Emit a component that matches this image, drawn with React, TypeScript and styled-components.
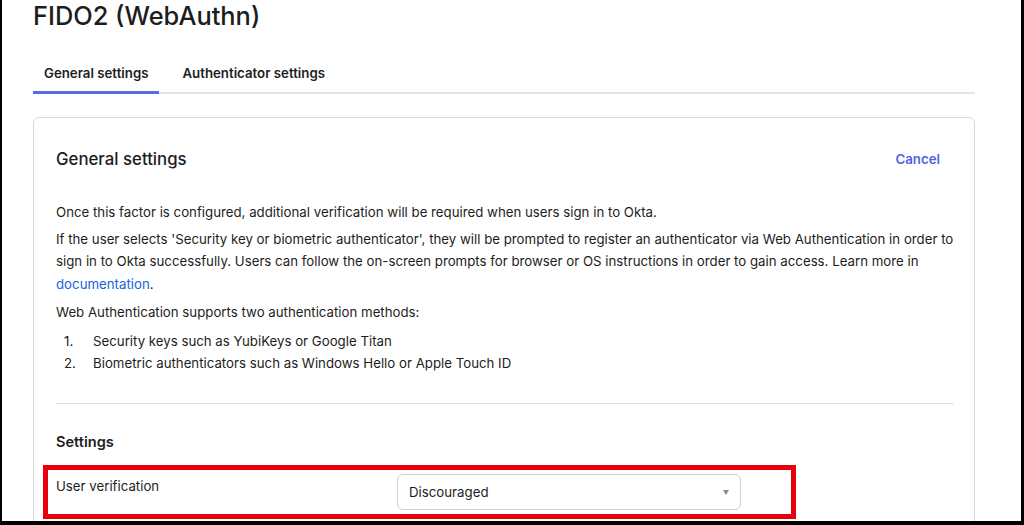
import React from "react";
import styled, { createGlobalStyle } from "styled-components";

const GlobalStyle = createGlobalStyle`
  html, body {
    margin: 0;
    padding: 0;
    background: #ffffff;
  }
  body {
    font-family: Inter, "Noto Sans", "Liberation Sans", sans-serif;
    color: #1d1d21;
    -webkit-font-smoothing: antialiased;
  }
  * { box-sizing: border-box; }
`;

const Frame = styled.div`
  width: 1024px;
  height: 525px;
  overflow: hidden;
  border-left: 2px solid #000;
  border-right: 3px solid #000;
  border-bottom: 4px solid #000;
  background: #fff;
`;

const Main = styled.main`
  padding: 1px 46px 0 31px;
  display: flex;
  flex-direction: column;
`;

const PageTitle = styled.h1`
  margin: 0;
  font-size: 25.4px;
  line-height: 30px;
  font-weight: 500;
  color: #1d1d21;
`;

const TabList = styled.div`
  margin-top: 21px;
  display: flex;
  box-shadow: inset 0 -2px 0 #e4e4e7;
`;

const Tab = styled.button<{ $active?: boolean }>`
  font-family: inherit;
  background: none;
  border: none;
  border-bottom: 3px solid ${(p) => (p.$active ? "#546be7" : "transparent")};
  padding: 11px 11px 8px;
  margin-right: ${(p) => (p.$active ? "12px" : "0")};
  font-size: 13.25px;
  line-height: 20px;
  font-weight: 600;
  color: #1d1d21;
  cursor: pointer;
`;

const Card = styled.section`
  margin-top: 23px;
  border: 1px solid #d7d7dc;
  border-radius: 6px;
  padding: 29px 20px 40px 22px;
`;

const CardHeader = styled.div`
  display: flex;
  justify-content: space-between;
  align-items: center;
  margin-bottom: 30px;
`;

const CardTitle = styled.h2`
  margin: 0;
  font-size: 16.8px;
  line-height: 24px;
  font-weight: 500;
  color: #1d1d21;
`;

const LinkButton = styled.button`
  font-family: inherit;
  background: none;
  border: none;
  padding: 0 14px 0 12px;
  font-size: 13.25px;
  line-height: 20px;
  font-weight: 600;
  color: #4c64e1;
  cursor: pointer;
`;

const Paragraph = styled.p<{ $tight?: boolean }>`
  margin: 0 0 ${(p) => (p.$tight ? "4px" : "6px")};
  font-size: 13.25px;
  line-height: 22.5px;
  color: #1d1d21;
`;

const DocLink = styled.a`
  color: #1662dd;
  text-decoration: none;
`;

const MethodList = styled.ol`
  list-style: none;
  margin: 0;
  padding: 0;
`;

const MethodItem = styled.li`
  display: flex;
  font-size: 13.25px;
  line-height: 22.5px;
  color: #1d1d21;
`;

const ItemNumber = styled.span`
  width: 37px;
  padding-left: 8px;
  flex-shrink: 0;
`;

const Divider = styled.hr`
  border: none;
  border-top: 1px solid #e1e1e5;
  margin: 28px 0 27px;
`;

const SectionTitle = styled.h3`
  margin: 0 0 21px;
  font-size: 14.6px;
  line-height: 22px;
  font-weight: 600;
  color: #1d1d21;
`;

const FieldRow = styled.div`
  position: relative;
  display: grid;
  grid-template-columns: 341px 344px;
  align-items: start;
`;

const FieldLabel = styled.label`
  padding-top: 1px;
  font-size: 13.25px;
  line-height: 22px;
  color: #1d1d21;
`;

const SelectBox = styled.div`
  height: 36px;
  border: 1px solid #d0d0d6;
  border-radius: 6px;
  display: flex;
  align-items: center;
  justify-content: space-between;
  padding: 0 11px;
  font-size: 13.25px;
  color: #1d1d21;
  background: #fff;
`;

const Caret = styled.span`
  width: 0;
  height: 0;
  border-left: 3.5px solid transparent;
  border-right: 3.5px solid transparent;
  border-top: 5px solid #8a8a92;
  margin-top: 2px;
`;

const Highlight = styled.span`
  position: absolute;
  left: -13px;
  top: -9px;
  width: 753px;
  height: 54px;
  border: 5px solid #e5000b;
  pointer-events: none;
`;

export default function App() {
  return (
    <>
      <GlobalStyle />
      <Frame>
        <Main>
          <PageTitle>FIDO2 (WebAuthn)</PageTitle>
          <TabList>
            <Tab $active>General settings</Tab>
            <Tab>Authenticator settings</Tab>
          </TabList>
          <Card>
            <CardHeader>
              <CardTitle>General settings</CardTitle>
              <LinkButton>Cancel</LinkButton>
            </CardHeader>
            <Paragraph $tight>
              Once this factor is configured, additional verification will be required when users sign in to Okta.
            </Paragraph>
            <Paragraph>
              If the user selects 'Security key or biometric authenticator', they will be prompted to register an
              authenticator via Web Authentication in order to sign in to Okta successfully. Users can follow the
              on-screen prompts for browser or OS instructions in order to gain access. Learn more in{" "}
              <DocLink href="#">documentation</DocLink>.
            </Paragraph>
            <Paragraph>Web Authentication supports two authentication methods:</Paragraph>
            <MethodList>
              <MethodItem>
                <ItemNumber>1.</ItemNumber>
                Security keys such as YubiKeys or Google Titan
              </MethodItem>
              <MethodItem>
                <ItemNumber>2.</ItemNumber>
                Biometric authenticators such as Windows Hello or Apple Touch ID
              </MethodItem>
            </MethodList>
            <Divider />
            <SectionTitle>Settings</SectionTitle>
            <FieldRow>
              <FieldLabel>User verification</FieldLabel>
              <SelectBox>
                Discouraged
                <Caret />
              </SelectBox>
              <Highlight />
            </FieldRow>
          </Card>
        </Main>
      </Frame>
    </>
  );
}
